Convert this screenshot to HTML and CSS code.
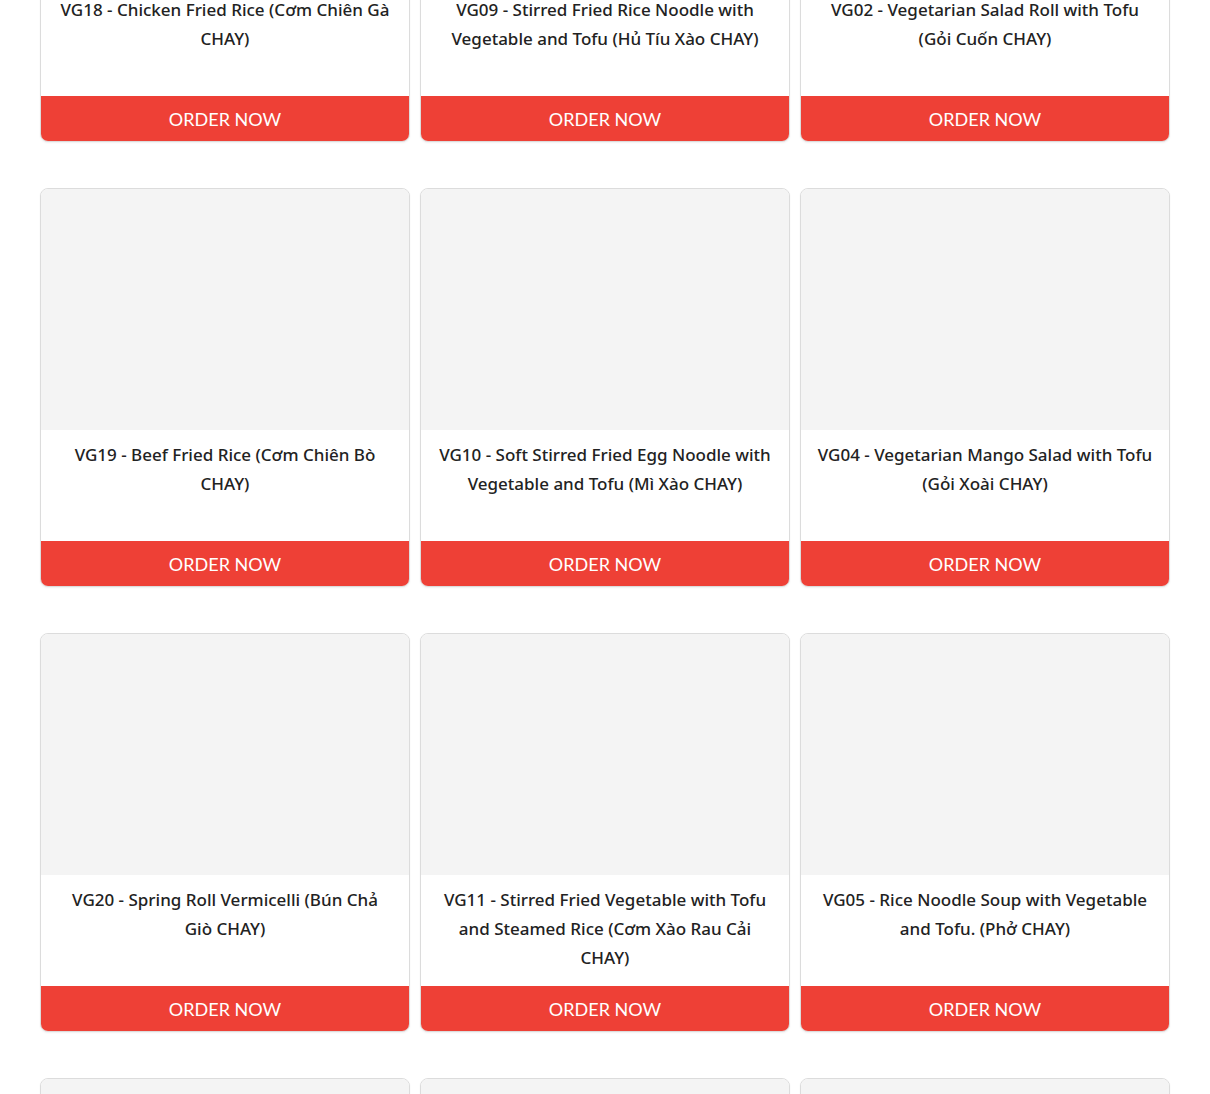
FILE: index.html
```html
<!DOCTYPE html>
<html lang="en">
<head>
    <meta charset="UTF-8">
    <meta name="viewport" content="width=device-width, initial-scale=1.0">
    <title>Vegetarian Menu</title>
    <link rel="stylesheet" href="styles.css">
</head>
<body>
    <div class="menu-grid">
        <!-- Row 1 -->
        <div class="card">
            <div class="card-image"></div>
            <div class="card-title">VG18 - Chicken Fried Rice (Cơm Chiên Gà CHAY)</div>
            <a class="order-btn" href="#">Order now</a>
        </div>
        <div class="card">
            <div class="card-image"></div>
            <div class="card-title">VG09 - Stirred Fried Rice Noodle with Vegetable and Tofu (Hủ Tíu Xào CHAY)</div>
            <a class="order-btn" href="#">Order now</a>
        </div>
        <div class="card">
            <div class="card-image"></div>
            <div class="card-title">VG02 - Vegetarian Salad Roll with Tofu (Gỏi Cuốn CHAY)</div>
            <a class="order-btn" href="#">Order now</a>
        </div>

        <!-- Row 2 -->
        <div class="card">
            <div class="card-image"></div>
            <div class="card-title">VG19 - Beef Fried Rice (Cơm Chiên Bò CHAY)</div>
            <a class="order-btn" href="#">Order now</a>
        </div>
        <div class="card">
            <div class="card-image"></div>
            <div class="card-title">VG10 - Soft Stirred Fried Egg Noodle with Vegetable and Tofu (Mì Xào CHAY)</div>
            <a class="order-btn" href="#">Order now</a>
        </div>
        <div class="card">
            <div class="card-image"></div>
            <div class="card-title">VG04 - Vegetarian Mango Salad with Tofu (Gỏi Xoài CHAY)</div>
            <a class="order-btn" href="#">Order now</a>
        </div>

        <!-- Row 3 -->
        <div class="card">
            <div class="card-image"></div>
            <div class="card-title">VG20 - Spring Roll Vermicelli (Bún Chả Giò CHAY)</div>
            <a class="order-btn" href="#">Order now</a>
        </div>
        <div class="card">
            <div class="card-image"></div>
            <div class="card-title">VG11 - Stirred Fried Vegetable with Tofu and Steamed Rice (Cơm Xào Rau Cải CHAY)</div>
            <a class="order-btn" href="#">Order now</a>
        </div>
        <div class="card">
            <div class="card-image"></div>
            <div class="card-title">VG05 - Rice Noodle Soup with Vegetable and Tofu. (Phở CHAY)</div>
            <a class="order-btn" href="#">Order now</a>
        </div>

        <!-- Row 4 (only the tops are in view) -->
        <div class="card card-peek">
            <div class="card-image"></div>
        </div>
        <div class="card card-peek">
            <div class="card-image"></div>
        </div>
        <div class="card card-peek">
            <div class="card-image"></div>
        </div>
    </div>
</body>
</html>
```

FILE: styles.css
```css
body {
    margin: 0;
    padding: 0 40px;
    background-color: white;
    font-family: 'Lato', sans-serif;
    overflow: hidden;
}

/* page is shown scrolled part way down the menu */
.menu-grid {
    display: grid;
    grid-template-columns: repeat(3, 1fr);
    column-gap: 10px;
    row-gap: 46px;
    margin-top: -257px;
}

.card {
    display: flex;
    flex-direction: column;
    border: 1px solid #dcdcdc;
    border-radius: 8px;
    overflow: hidden;
    background-color: white;
    box-shadow: 0 1px 2px rgba(0,0,0,0.06);
}

.card-image {
    height: 241px;
    background-color: #f4f4f4;
}

.card-title {
    flex: 1;
    min-height: 89px;
    padding: 10px 16px 12px;
    text-align: center;
    font-family: 'Noto Sans', sans-serif;
    font-size: 17px;
    font-weight: 500;
    line-height: 29px;
    color: #222;
}

.order-btn {
    display: block;
    height: 45px;
    line-height: 46px;
    background-color: #ee4036;
    color: white;
    text-align: center;
    text-decoration: none;
    text-transform: uppercase;
    font-size: 18px;
}
```
